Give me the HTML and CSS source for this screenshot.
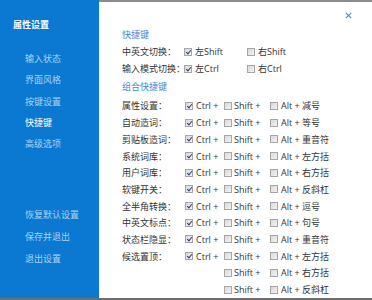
FILE: index.html
```html
<!DOCTYPE html>
<html lang="zh-CN">
<head>
<meta charset="utf-8">
<title>属性设置</title>
<link rel="stylesheet" href="styles.css">
</head>
<body>
<div class="window">
  <aside class="sidebar">
    <div class="side-title">属性设置</div>
    <nav class="menu">
      <div class="menu-item">输入状态</div>
      <div class="menu-item">界面风格</div>
      <div class="menu-item">按键设置</div>
      <div class="menu-item active">快捷键</div>
      <div class="menu-item">高级选项</div>
    </nav>
    <nav class="menu menu-bottom">
      <div class="menu-item">恢复默认设置</div>
      <div class="menu-item">保存并退出</div>
      <div class="menu-item">退出设置</div>
    </nav>
  </aside>
  <main class="panel">
    <div class="topbar">
      <span class="close"><svg width="7" height="7" viewBox="0 0 7 7"><path d="M0.8 0.8L6.2 6.2M6.2 0.8L0.8 6.2" stroke="#5a8fb3" stroke-width="1.2" fill="none"/></svg></span>
    </div>
    <div class="heading">快捷键</div>
    <div class="row top-row">
      <span class="label">中英文切换：</span>
      <span class="cell wide"><span class="cb on"></span>左Shift</span>
      <span class="cell"><span class="cb"></span>右Shift</span>
    </div>
    <div class="row top-row">
      <span class="label">输入模式切换：</span>
      <span class="cell wide"><span class="cb on"></span>左Ctrl</span>
      <span class="cell"><span class="cb"></span>右Ctrl</span>
    </div>
    <div class="heading heading2">组合快捷键</div>
    <div class="combos">
      <div class="row combo"><span class="label">属性设置：</span><span class="cell c1"><span class="cb on"></span>Ctrl +</span><span class="cell c2"><span class="cb"></span>Shift +</span><span class="cell"><span class="cb"></span>Alt + 减号</span></div>
      <div class="row combo"><span class="label">自动造词：</span><span class="cell c1"><span class="cb on"></span>Ctrl +</span><span class="cell c2"><span class="cb"></span>Shift +</span><span class="cell"><span class="cb"></span>Alt + 等号</span></div>
      <div class="row combo"><span class="label">剪贴板造词：</span><span class="cell c1"><span class="cb on"></span>Ctrl +</span><span class="cell c2"><span class="cb"></span>Shift +</span><span class="cell"><span class="cb"></span>Alt + 重音符</span></div>
      <div class="row combo"><span class="label">系统词库：</span><span class="cell c1"><span class="cb on"></span>Ctrl +</span><span class="cell c2"><span class="cb"></span>Shift +</span><span class="cell"><span class="cb"></span>Alt + 左方括</span></div>
      <div class="row combo"><span class="label">用户词库：</span><span class="cell c1"><span class="cb on"></span>Ctrl +</span><span class="cell c2"><span class="cb"></span>Shift +</span><span class="cell"><span class="cb"></span>Alt + 右方括</span></div>
      <div class="row combo"><span class="label">软键开关：</span><span class="cell c1"><span class="cb on"></span>Ctrl +</span><span class="cell c2"><span class="cb"></span>Shift +</span><span class="cell"><span class="cb"></span>Alt + 反斜杠</span></div>
      <div class="row combo"><span class="label">全半角转换：</span><span class="cell c1"><span class="cb on"></span>Ctrl +</span><span class="cell c2"><span class="cb"></span>Shift +</span><span class="cell"><span class="cb"></span>Alt + 逗号</span></div>
      <div class="row combo"><span class="label">中英文标点：</span><span class="cell c1"><span class="cb on"></span>Ctrl +</span><span class="cell c2"><span class="cb"></span>Shift +</span><span class="cell"><span class="cb"></span>Alt + 句号</span></div>
      <div class="row combo"><span class="label">状态栏隐显：</span><span class="cell c1"><span class="cb on"></span>Ctrl +</span><span class="cell c2"><span class="cb"></span>Shift +</span><span class="cell"><span class="cb"></span>Alt + 重音符</span></div>
      <div class="row combo"><span class="label">候选置顶：</span><span class="cell c1"><span class="cb on"></span>Ctrl +</span><span class="cell c2"><span class="cb"></span>Shift +</span><span class="cell"><span class="cb"></span>Alt + 左方括</span></div>
      <div class="row combo"><span class="label"></span><span class="cell c1"></span><span class="cell c2"><span class="cb"></span>Shift +</span><span class="cell"><span class="cb"></span>Alt + 右方括</span></div>
      <div class="row combo"><span class="label"></span><span class="cell c1"></span><span class="cell c2"><span class="cb"></span>Shift +</span><span class="cell"><span class="cb"></span>Alt + 反斜杠</span></div>
    </div>
  </main>
</div>
</body>
</html>
```

FILE: styles.css
```css
html, body {
  margin: 0;
  padding: 0;
  background: #ffffff;
}
body {
  font-family: "Open Sans", "Noto Sans CJK SC", sans-serif;
  font-size: 9px;
  color: #333333;
}
.window {
  width: 372px;
  height: 300px;
  display: flex;
  box-sizing: border-box;
  border-bottom: 2px solid #6e6e6e;
  overflow: hidden;
}
.sidebar {
  width: 99px;
  flex: none;
  background: #0b79d1;
  color: #a9d1f1;
  padding-top: 17px;
  box-sizing: border-box;
}
.side-title {
  padding-left: 13px;
  height: 16px;
  line-height: 16px;
  font-weight: bold;
  color: #ffffff;
  font-size: 9px;
}
.menu {
  margin-top: 15px;
  padding-left: 25px;
}
.menu-item {
  height: 21.3px;
  line-height: 21.3px;
}
.menu-item.active {
  color: #ffffff;
}
.menu-bottom {
  margin-top: 49.5px;
}
.menu-bottom .menu-item {
  height: 22px;
  line-height: 22px;
}
.panel {
  flex: 1;
  border-top: 2px solid #8c8c8c;
  padding-left: 23px;
  box-sizing: border-box;
}
.topbar {
  height: 26px;
  display: flex;
  justify-content: flex-end;
  align-items: flex-start;
  padding-right: 20px;
}
.close {
  margin-top: 10px;
  display: block;
  width: 7px;
  height: 7px;
}
.close svg {
  display: block;
}
.heading {
  height: 14px;
  line-height: 14px;
  color: #3a8bd6;
}
.heading2 {
  margin-top: 3px;
}
.row {
  display: flex;
  align-items: center;
  white-space: nowrap;
}
.top-row {
  height: 17px;
}
.top-row:first-of-type {
  margin-top: 1px;
}
.heading + .top-row {
  margin-top: 1px;
}
.label {
  width: 62px;
  flex: none;
}
.cell {
  display: flex;
  align-items: center;
  flex: none;
}
.cell.wide {
  width: 63px;
}
.combos {
  margin-top: 3.6px;
}
.combo {
  height: 16.7px;
}
.combo .label {
  width: 63px;
}
.cell.c1 {
  width: 39px;
}
.cell.c2 {
  width: 46px;
}
.cb {
  position: relative;
  width: 8px;
  height: 8px;
  box-sizing: border-box;
  border: 1px solid #a6a6a6;
  background: linear-gradient(135deg, #d9d9d9 0%, #f3f3f3 100%);
  margin-right: 3px;
  flex: none;
}
.c2 .cb {
  margin-right: 2px;
}
.cb.on::after {
  content: "";
  position: absolute;
  left: 1.8px;
  top: 0px;
  width: 2px;
  height: 4px;
  border-right: 1.3px solid #2b3f73;
  border-bottom: 1.3px solid #2b3f73;
  transform: rotate(40deg);
}
```
